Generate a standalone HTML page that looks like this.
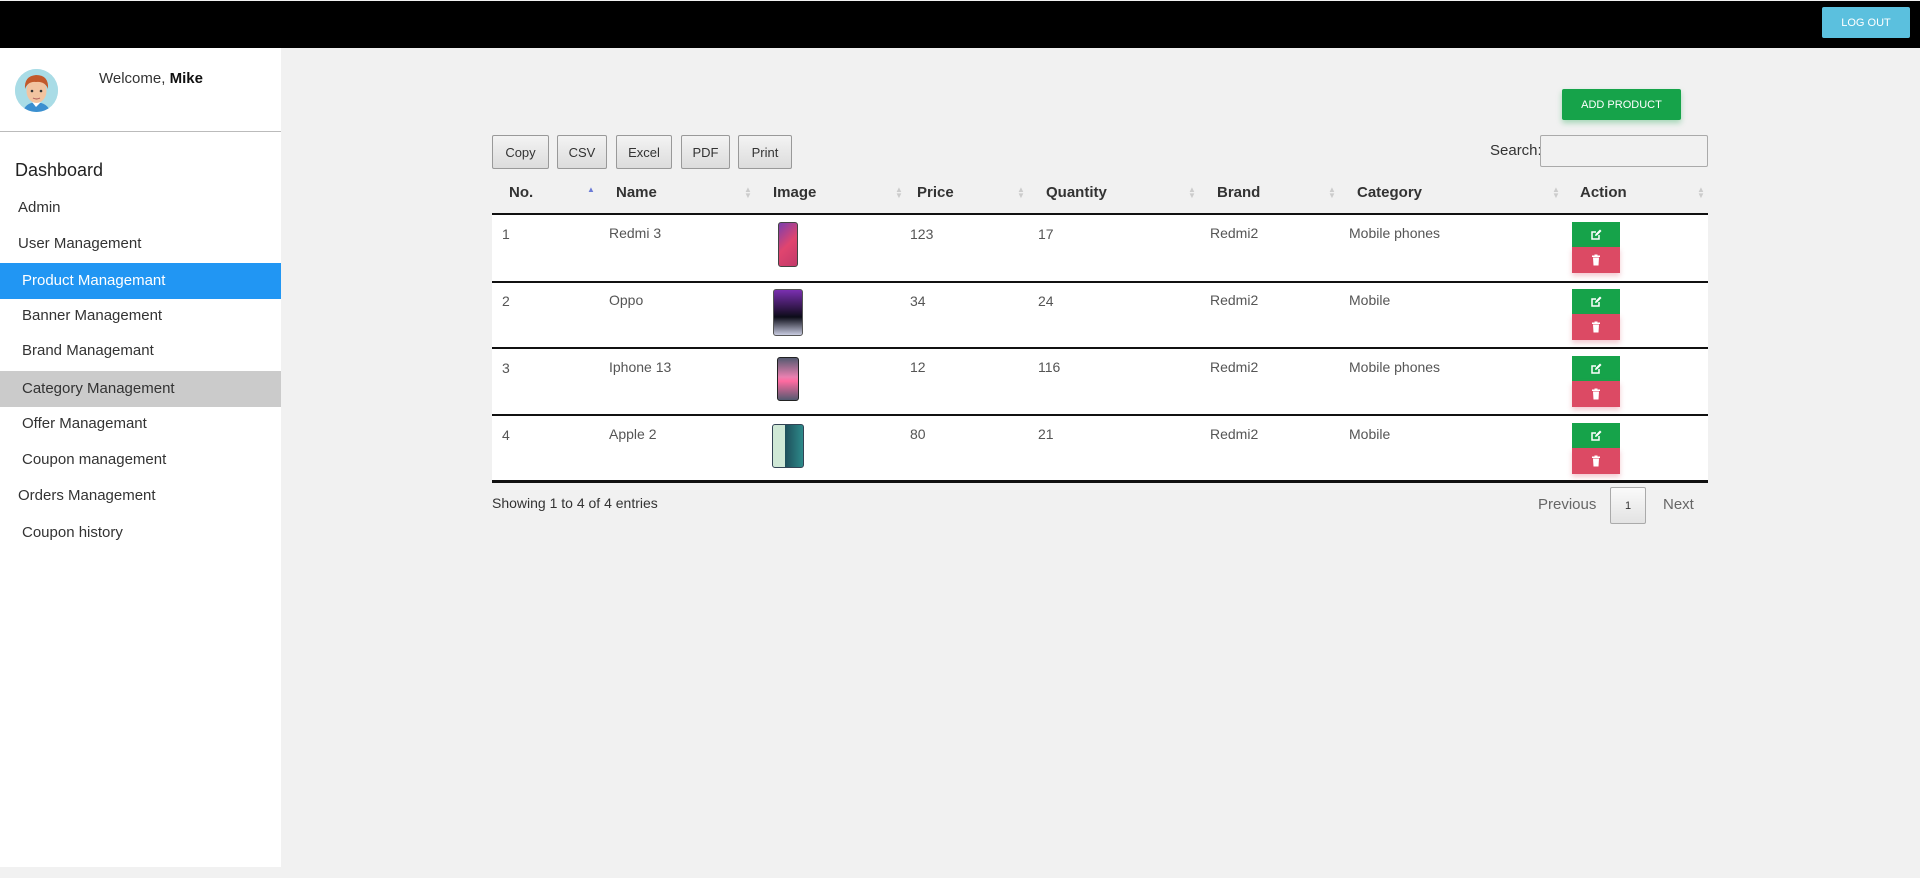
<!DOCTYPE html>
<html><head><meta charset="utf-8"><style>
*{box-sizing:border-box;margin:0;padding:0}
body{width:1920px;height:878px;background:#f1f1f1;font-family:"Liberation Sans",sans-serif;position:relative;overflow:hidden;color:#333}
.top{position:absolute;left:0;top:1px;width:1920px;height:47px;background:#000}
.logout{position:absolute;left:1822px;top:7px;width:88px;height:31px;background:#5bc0de;color:#fff;font-size:11px;display:flex;align-items:center;justify-content:center;border-radius:2px;box-shadow:0 2px 4px rgba(0,0,0,.3)}
.side{position:absolute;left:0;top:48px;width:281px;height:819px;background:#fff}
.av{position:absolute;left:15px;top:69px;width:43px;height:43px;border-radius:50%;background:#a9dce6;overflow:hidden}
.welcome{position:absolute;left:99px;top:70px;font-size:15px;color:#333}
.div{position:absolute;left:0;top:131px;width:281px;height:1px;background:#bbb}
.dash{position:absolute;left:15px;top:160px;font-size:18px;color:#222}
.nav{position:absolute;left:0;width:281px;height:36px;line-height:36px;font-size:15px;color:#333}
.abs{position:absolute}
.btn{position:absolute;top:135px;height:34px;border:1px solid #999;border-radius:2px;background:linear-gradient(#f3f3f3,#dcdcdc);font-size:13px;color:#333;display:flex;align-items:center;justify-content:center}
.add{position:absolute;left:1562px;top:89px;width:119px;height:31px;background:#16a34a;color:#fff;font-size:11px;display:flex;align-items:center;justify-content:center;border-radius:2px;box-shadow:0 3px 6px rgba(22,163,74,.35)}
.tbl{position:absolute;left:492px;top:214px;width:1216px;height:267px;background:#fff}
.hl{position:absolute;left:492px;width:1216px;height:2px;background:#111}
.th{position:absolute;top:184px;font-size:15px;font-weight:bold;color:#333}
.td{position:absolute;font-size:14px;color:#555}
.sort{position:absolute;top:187px;font-size:8px;line-height:6px;color:#ccc}
.ed{position:absolute;left:1572px;width:48px;height:25px;background:#16a34a;display:flex;align-items:center;justify-content:center}
.del{position:absolute;left:1572px;width:48px;height:26px;background:#dc4a64;display:flex;align-items:center;justify-content:center;box-shadow:0 3px 5px rgba(220,74,100,.3)}
.ph{position:absolute;border-radius:3px}
</style></head><body>
<div class="top"></div>
<div class="logout">LOG OUT</div>
<div class="side"></div>
<div class="av"><svg width="43" height="43" viewBox="0 0 43 43"><rect width="43" height="43" fill="#a9dce6"/><path d="M8 43 Q10 34 21 33 Q33 34 35 43Z" fill="#3b8fd0"/><path d="M17 33 L21 38 L26 33Z" fill="#fff"/><ellipse cx="21.5" cy="22" rx="10" ry="12" fill="#f2c4a0"/><path d="M10 20 Q9 7 21 6 Q34 6 33 20 Q30 12 21 13 Q13 12 10 20Z" fill="#c2592b"/><circle cx="17" cy="22" r="1.3" fill="#333"/><circle cx="26" cy="22" r="1.3" fill="#333"/><path d="M18 29 Q21.5 31 25 29" stroke="#a55" fill="none"/></svg></div>
<div class="welcome">Welcome, <b style="color:#111">Mike</b></div>
<div class="div"></div>
<div class="dash">Dashboard</div>
<div class="nav" style="top:190px;padding-left:18px">Admin</div>
<div class="nav" style="top:226px;padding-left:18px">User Management</div>
<div class="nav" style="top:263px;padding-left:22px;background:#2196f3;color:#fff">Product Managemant</div>
<div class="nav" style="top:298px;padding-left:22px">Banner Management</div>
<div class="nav" style="top:333px;padding-left:22px">Brand Managemant</div>
<div class="nav" style="top:371px;padding-left:22px;background:#cbcbcb">Category Management</div>
<div class="nav" style="top:406px;padding-left:22px">Offer Managemant</div>
<div class="nav" style="top:442px;padding-left:22px">Coupon management</div>
<div class="nav" style="top:478px;padding-left:18px">Orders Management</div>
<div class="nav" style="top:515px;padding-left:22px">Coupon history</div>

<div class="add">ADD PRODUCT</div>
<div class="btn" style="left:492px;width:57px">Copy</div>
<div class="btn" style="left:557px;width:50px">CSV</div>
<div class="btn" style="left:616px;width:56px">Excel</div>
<div class="btn" style="left:681px;width:49px">PDF</div>
<div class="btn" style="left:738px;width:54px">Print</div>
<div class="abs" style="left:1490px;top:142px;font-size:15px;color:#333">Search:</div>
<div class="abs" style="left:1540px;top:135px;width:168px;height:32px;border:1px solid #aaa;border-radius:2px;background:#f1f1f1"></div>

<div class="th" style="left:509px">No.</div>
<div class="th" style="left:616px">Name</div>
<div class="th" style="left:773px">Image</div>
<div class="th" style="left:917px">Price</div>
<div class="th" style="left:1046px">Quantity</div>
<div class="th" style="left:1217px">Brand</div>
<div class="th" style="left:1357px">Category</div>
<div class="th" style="left:1580px">Action</div>
<div class="sort" style="left:587px;color:#6b7bd6">▲</div>
<div class="sort" style="left:744px">▲<br>▼</div>
<div class="sort" style="left:895px">▲<br>▼</div>
<div class="sort" style="left:1017px">▲<br>▼</div>
<div class="sort" style="left:1188px">▲<br>▼</div>
<div class="sort" style="left:1328px">▲<br>▼</div>
<div class="sort" style="left:1552px">▲<br>▼</div>
<div class="sort" style="left:1697px">▲<br>▼</div>

<div class="tbl"></div>
<div class="hl" style="top:213px"></div>
<div class="hl" style="top:281px;height:1.5px"></div>
<div class="hl" style="top:347px;height:1.5px"></div>
<div class="hl" style="top:414px;height:1.5px"></div>
<div class="hl" style="top:480px;height:2.5px"></div>

<!-- rows -->
<div class="td" style="left:502px;top:226px">1</div><div class="td" style="left:609px;top:225px">Redmi 3</div><div class="td" style="left:910px;top:226px">123</div><div class="td" style="left:1038px;top:226px">17</div><div class="td" style="left:1210px;top:225px">Redmi2</div><div class="td" style="left:1349px;top:225px">Mobile phones</div>
<div class="td" style="left:502px;top:293px">2</div><div class="td" style="left:609px;top:292px">Oppo</div><div class="td" style="left:910px;top:293px">34</div><div class="td" style="left:1038px;top:293px">24</div><div class="td" style="left:1210px;top:292px">Redmi2</div><div class="td" style="left:1349px;top:292px">Mobile</div>
<div class="td" style="left:502px;top:360px">3</div><div class="td" style="left:609px;top:359px">Iphone 13</div><div class="td" style="left:910px;top:359px">12</div><div class="td" style="left:1038px;top:359px">116</div><div class="td" style="left:1210px;top:359px">Redmi2</div><div class="td" style="left:1349px;top:359px">Mobile phones</div>
<div class="td" style="left:502px;top:427px">4</div><div class="td" style="left:609px;top:426px">Apple 2</div><div class="td" style="left:910px;top:426px">80</div><div class="td" style="left:1038px;top:426px">21</div><div class="td" style="left:1210px;top:426px">Redmi2</div><div class="td" style="left:1349px;top:426px">Mobile</div>

<div class="ph" style="left:778px;top:222px;width:20px;height:45px;background:linear-gradient(135deg,#7a3fae,#e0456f,#c23a6a);border:1px solid #444"></div>
<div class="ph" style="left:773px;top:289px;width:30px;height:47px;background:linear-gradient(#7a2fb0,#2a1440 45%,#0c0c18 60%,#c8cbe0);border:1px solid #555"></div>
<div class="ph" style="left:777px;top:357px;width:22px;height:44px;background:linear-gradient(#555a70,#e880b0 45%,#ff6aa0 55%,#555a70);border:1px solid #222"></div>
<div class="ph" style="left:772px;top:424px;width:32px;height:44px;background:linear-gradient(90deg,#cfe8d6 40%,#1e4e5a 40%,#2d8a8a);border:1px solid #345"></div>

<!-- action buttons -->
<svg width="0" height="0" style="position:absolute"><defs>
<symbol id="e" viewBox="0 0 12 12"><path d="M9 6v4H2V3h4" stroke="#fff" stroke-width="1.5" fill="none"/><path d="M5 7l.5-2L10 .5l1.5 1.5L7 6.5z" fill="#fff"/></symbol>
<symbol id="t" viewBox="0 0 12 12"><rect x="2" y="1.5" width="8" height="1.5" fill="#fff"/><rect x="4.5" y=".5" width="3" height="1.5" fill="#fff"/><path d="M3 3.5h6l-.5 8h-5z" fill="#fff"/></symbol></defs></svg>
<div class="ed" style="top:222px"><svg width="12" height="12"><use href="#e"/></svg></div><div class="del" style="top:247px"><svg width="12" height="12"><use href="#t"/></svg></div>
<div class="ed" style="top:289px"><svg width="12" height="12"><use href="#e"/></svg></div><div class="del" style="top:314px"><svg width="12" height="12"><use href="#t"/></svg></div>
<div class="ed" style="top:356px"><svg width="12" height="12"><use href="#e"/></svg></div><div class="del" style="top:381px"><svg width="12" height="12"><use href="#t"/></svg></div>
<div class="ed" style="top:423px"><svg width="12" height="12"><use href="#e"/></svg></div><div class="del" style="top:448px"><svg width="12" height="12"><use href="#t"/></svg></div>

<div class="abs" style="left:492px;top:495px;font-size:14px;color:#333">Showing 1 to 4 of 4 entries</div>
<div class="abs" style="left:1538px;top:496px;font-size:15px;color:#666">Previous</div>
<div class="abs" style="left:1610px;top:487px;width:36px;height:37px;border:1px solid #aaa;border-radius:2px;background:linear-gradient(#fafafa,#e3e3e3);font-size:11px;display:flex;align-items:center;justify-content:center;color:#333">1</div>
<div class="abs" style="left:1663px;top:496px;font-size:15px;color:#666">Next</div>
</body></html>
